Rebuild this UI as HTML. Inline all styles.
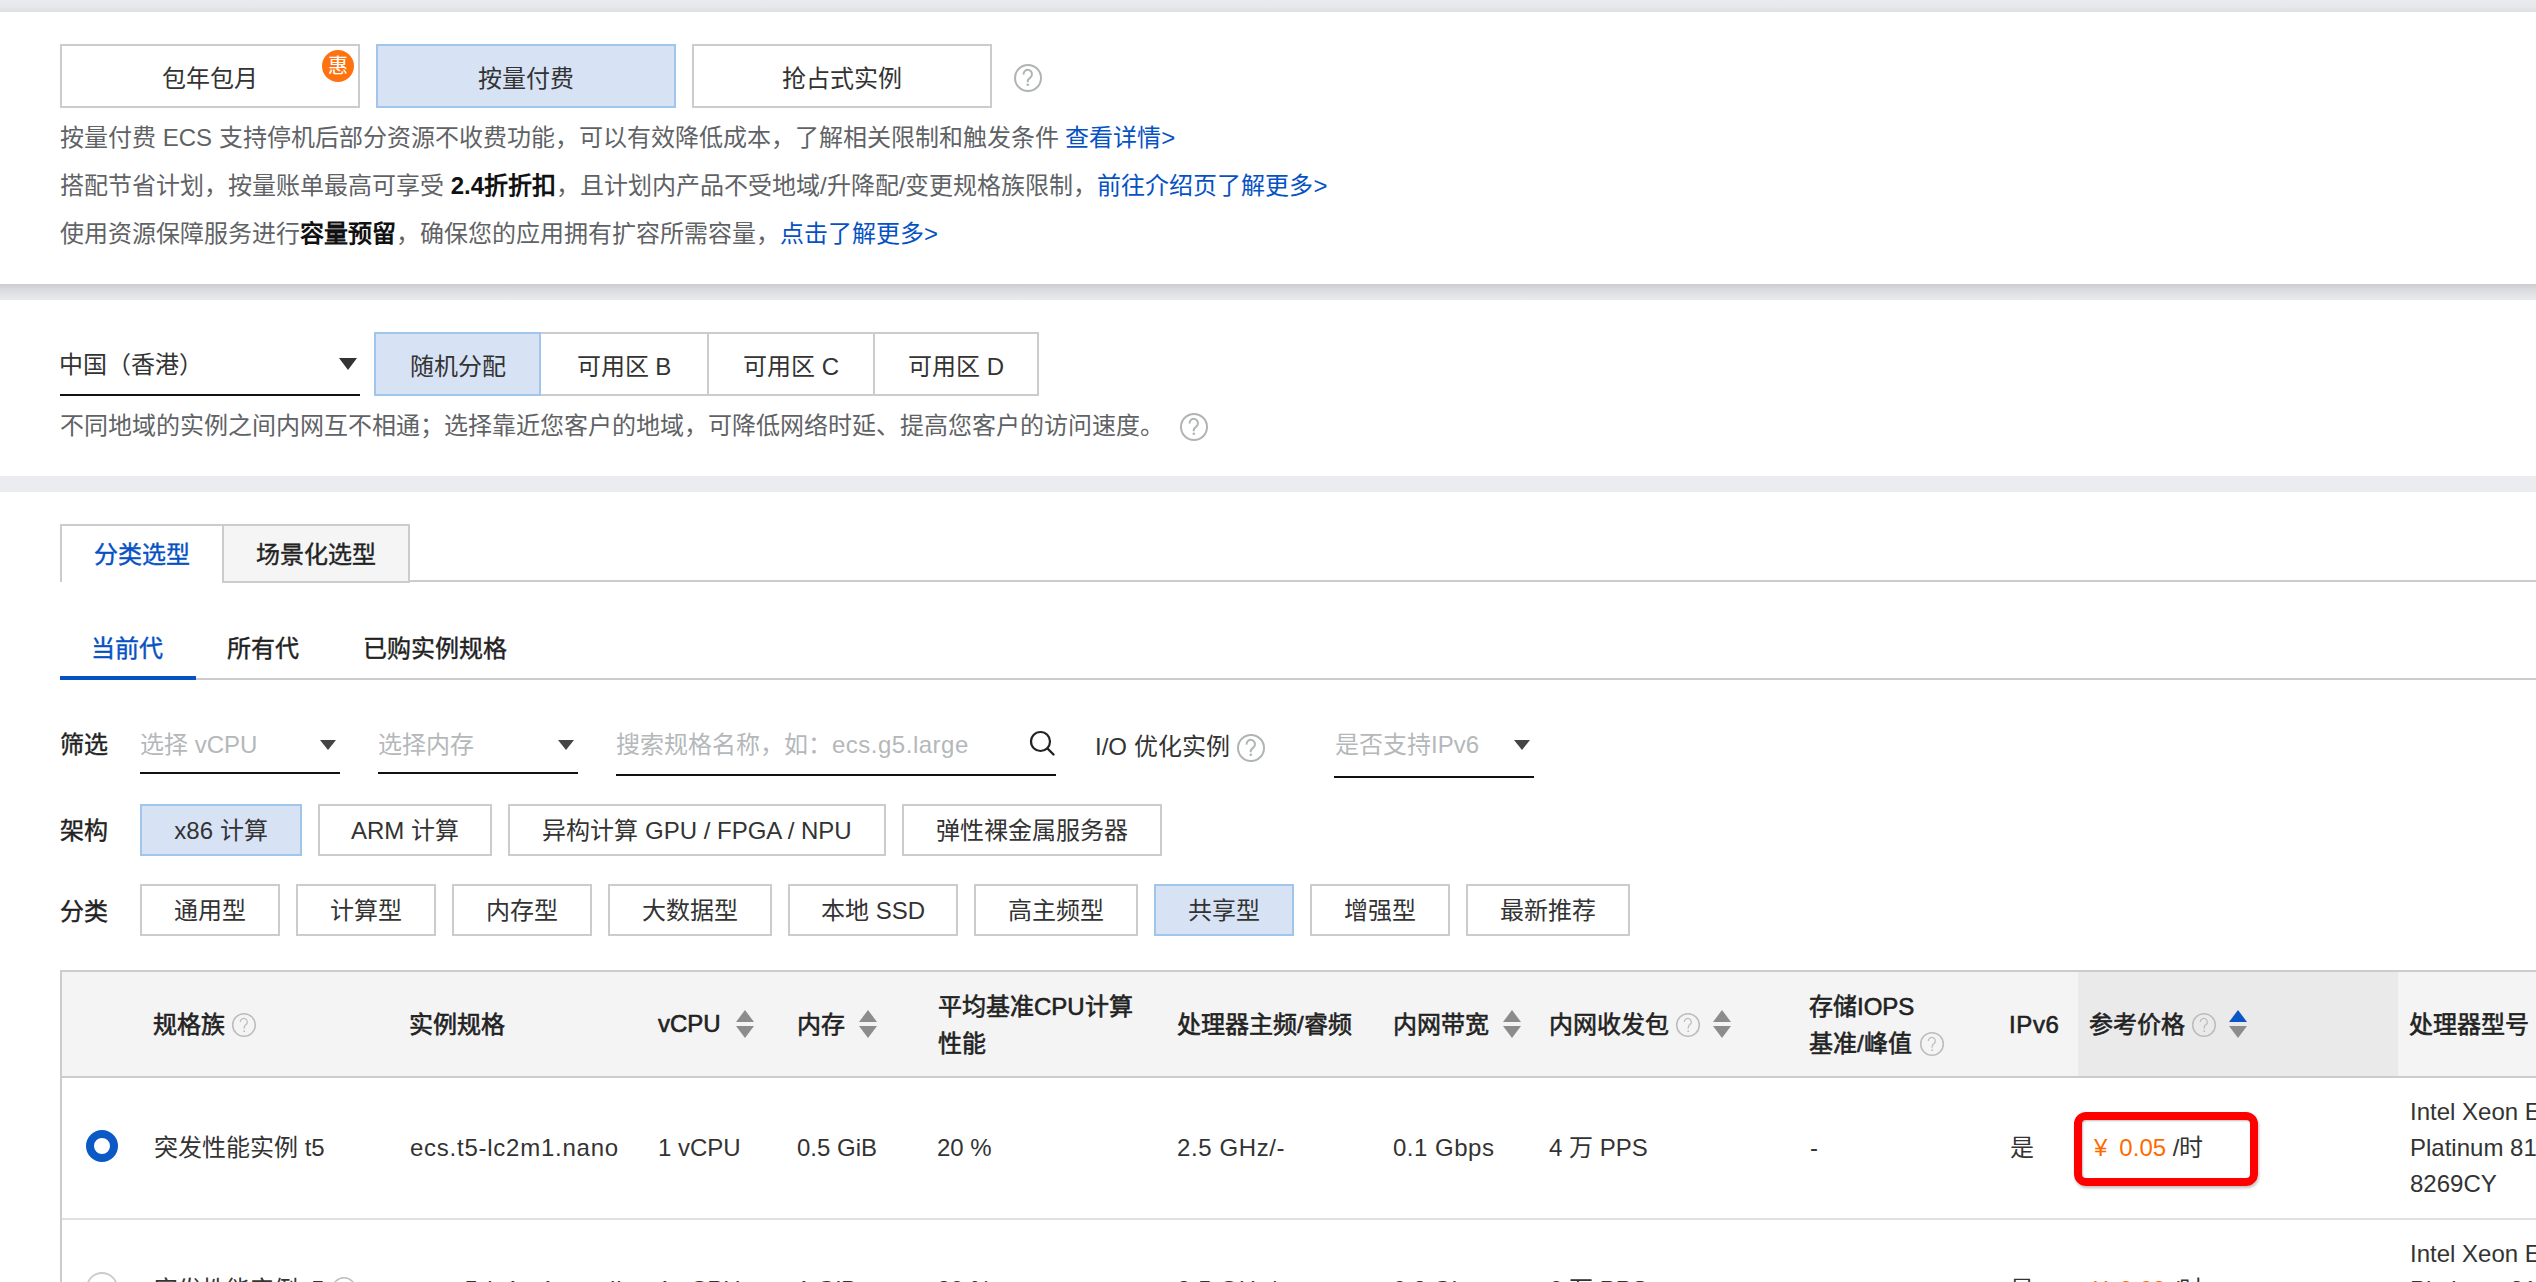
<!DOCTYPE html>
<html lang="zh-CN">
<head>
<meta charset="utf-8">
<style>
*{box-sizing:border-box;margin:0;padding:0}
html,body{width:2536px;height:1282px;overflow:hidden;background:#fff}
body{position:relative;font-family:"Liberation Sans",sans-serif;font-size:24px;color:#333}
.a{position:absolute;white-space:nowrap}
.band{position:absolute;left:0;width:2536px}
.btn{position:absolute;border:2px solid #ccc;background:#fff;display:flex;align-items:center;justify-content:center;color:#333;white-space:nowrap}
.sel{background:#d7e3f5;border-color:#a1c6ec}
.desc{color:#5f6366;line-height:48px}
.link{color:#0652c4}
.q{position:absolute}
.ul{position:absolute;height:2px;background:#111}
.tri{position:absolute;width:0;height:0;border-left:9px solid transparent;border-right:9px solid transparent;border-top:12px solid #333}
.tri2{position:absolute;width:0;height:0;border-left:8px solid transparent;border-right:8px solid transparent;border-top:10px solid #444}
.ph{color:#b4b8ba}
.th{color:#222;-webkit-text-stroke:0.6px #222}
.md{-webkit-text-stroke:0.4px currentColor}
.td{color:#333}
</style>
</head>
<body>
<!-- top band -->
<div class="band" style="top:0;height:12px;background:linear-gradient(#e9eaee 0,#e7e8ec 55%,#dedfe3 100%)"></div>

<!-- section 1 -->
<div class="btn" style="left:60px;top:44px;width:300px;height:64px">包年包月</div>
<div class="a" style="left:322px;top:50px;width:32px;height:32px;border-radius:50%;background:#fe7310;color:#fff;font-size:20px;line-height:32px;text-align:center">惠</div>
<div class="btn sel" style="left:376px;top:44px;width:300px;height:64px">按量付费</div>
<div class="btn" style="left:692px;top:44px;width:300px;height:64px">抢占式实例</div>
<svg class="q" style="left:1013px;top:63px" width="30" height="30" viewBox="0 0 30 30"><circle cx="15" cy="15" r="13" fill="none" stroke="#b0b4b4" stroke-width="2"/><path d="M10.6 11.6A4.2 4.2 0 1 1 17.6 14.2L15.6 16.2Q14.7 17.1 14.7 18.3V19.2" fill="none" stroke="#b0b4b4" stroke-width="2"/><circle cx="14.8" cy="21.8" r="1.3" fill="#b0b4b4"/></svg>

<div class="a desc" style="left:60px;top:114px">按量付费 ECS 支持停机后部分资源不收费功能，可以有效降低成本，了解相关限制和触发条件 <span class="link">查看详情&gt;</span></div>
<div class="a desc" style="left:60px;top:162px">搭配节省计划，按量账单最高可享受 <b style="color:#111">2.4折折扣</b>，且计划内产品不受地域/升降配/变更规格族限制，<span class="link">前往介绍页了解更多&gt;</span></div>
<div class="a desc" style="left:60px;top:210px">使用资源保障服务进行<b style="color:#111">容量预留</b>，确保您的应用拥有扩容所需容量，<span class="link">点击了解更多&gt;</span></div>

<!-- band 1 -->
<div class="band" style="top:284px;height:16px;background:linear-gradient(#cbccd0 0,#d8d9dd 30%,#e3e4e8 70%,#e9eaee 100%)"></div>

<!-- section 2 -->
<div class="a" style="left:59px;top:341px;line-height:48px;color:#333">中国（香港）</div>
<div class="tri" style="left:339px;top:358px"></div>
<div class="ul" style="left:60px;top:394px;width:300px"></div>
<div class="btn sel" style="left:374px;top:332px;width:167px;height:64px;z-index:2">随机分配</div>
<div class="btn" style="left:539px;top:332px;width:170px;height:64px">可用区 B</div>
<div class="btn" style="left:707px;top:332px;width:168px;height:64px">可用区 C</div>
<div class="btn" style="left:873px;top:332px;width:166px;height:64px">可用区 D</div>
<div class="a desc" style="left:60px;top:402px">不同地域的实例之间内网互不相通；选择靠近您客户的地域，可降低网络时延、提高您客户的访问速度。</div>
<svg class="q" style="left:1179px;top:412px" width="30" height="30" viewBox="0 0 30 30"><circle cx="15" cy="15" r="13" fill="none" stroke="#b0b4b4" stroke-width="2"/><path d="M10.6 11.6A4.2 4.2 0 1 1 17.6 14.2L15.6 16.2Q14.7 17.1 14.7 18.3V19.2" fill="none" stroke="#b0b4b4" stroke-width="2"/><circle cx="14.8" cy="21.8" r="1.3" fill="#b0b4b4"/></svg>

<!-- band 2 -->
<div class="band" style="top:476px;height:16px;background:#ebecf0"></div>

<!-- section 3 tabs -->
<div class="a" style="left:60px;top:580px;width:2476px;height:2px;background:#ccc"></div>
<div class="a md" style="left:60px;top:524px;width:164px;height:58px;border:2px solid #ccc;border-bottom:none;background:#fff;color:#0652c4;display:flex;align-items:center;justify-content:center;z-index:2;padding-bottom:4px">分类选型</div>
<div class="a md" style="left:222px;top:524px;width:188px;height:59px;border:2px solid #ccc;background:#f5f5f5;color:#222;display:flex;align-items:center;justify-content:center;padding-bottom:3px">场景化选型</div>

<div class="a" style="left:60px;top:678px;width:2476px;height:2px;background:#ccc"></div>
<div class="a" style="left:60px;top:676px;width:136px;height:4px;background:#0652c4"></div>
<div class="a md" style="left:91px;top:625px;line-height:48px;color:#0652c4;">当前代</div>
<div class="a md" style="left:227px;top:625px;line-height:48px;color:#222;">所有代</div>
<div class="a md" style="left:363px;top:625px;line-height:48px;color:#222;">已购实例规格</div>

<!-- filter row -->
<div class="a md" style="left:60px;top:721px;line-height:48px;color:#222;">筛选</div>
<div class="a ph" style="left:140px;top:721px;line-height:48px">选择 vCPU</div>
<div class="tri2" style="left:320px;top:740px"></div>
<div class="ul" style="left:140px;top:772px;width:200px"></div>
<div class="a ph" style="left:378px;top:721px;line-height:48px">选择内存</div>
<div class="tri2" style="left:558px;top:740px"></div>
<div class="ul" style="left:378px;top:772px;width:200px"></div>
<div class="a ph" style="left:616px;top:721px;line-height:48px">搜索规格名称，如：<span style="letter-spacing:0.5px">ecs.g5.large</span></div>
<svg class="q" style="left:1028px;top:729px" width="30" height="30" viewBox="0 0 30 30"><circle cx="12.5" cy="12.5" r="9.5" fill="none" stroke="#222" stroke-width="2.2"/><path d="M19.5 19.5L25.5 25.5" stroke="#222" stroke-width="2.4" stroke-linecap="round"/></svg>
<div class="ul" style="left:616px;top:774px;width:440px"></div>
<div class="a" style="left:1095px;top:723px;line-height:48px;color:#333">I/O 优化实例</div>
<svg class="q" style="left:1236px;top:733px" width="30" height="30" viewBox="0 0 30 30"><circle cx="15" cy="15" r="13" fill="none" stroke="#b0b4b4" stroke-width="2"/><path d="M10.6 11.6A4.2 4.2 0 1 1 17.6 14.2L15.6 16.2Q14.7 17.1 14.7 18.3V19.2" fill="none" stroke="#b0b4b4" stroke-width="2"/><circle cx="14.8" cy="21.8" r="1.3" fill="#b0b4b4"/></svg>
<div class="a ph" style="left:1335px;top:721px;line-height:48px">是否支持IPv6</div>
<div class="tri2" style="left:1514px;top:740px"></div>
<div class="ul" style="left:1334px;top:776px;width:200px"></div>

<!-- arch row -->
<div class="a md" style="left:60px;top:807px;line-height:48px;color:#222;">架构</div>
<div class="btn sel" style="left:140px;top:804px;width:162px;height:52px;padding-bottom:4px">x86 计算</div>
<div class="btn" style="left:318px;top:804px;width:174px;height:52px;padding-bottom:4px">ARM 计算</div>
<div class="btn" style="left:508px;top:804px;width:378px;height:52px;padding-bottom:4px">异构计算 GPU / FPGA / NPU</div>
<div class="btn" style="left:902px;top:804px;width:260px;height:52px;padding-bottom:4px">弹性裸金属服务器</div>

<!-- class row -->
<div class="a md" style="left:60px;top:888px;line-height:48px;color:#222;">分类</div>
<div class="btn" style="left:140px;top:884px;width:140px;height:52px;padding-bottom:4px">通用型</div>
<div class="btn" style="left:296px;top:884px;width:140px;height:52px;padding-bottom:4px">计算型</div>
<div class="btn" style="left:452px;top:884px;width:140px;height:52px;padding-bottom:4px">内存型</div>
<div class="btn" style="left:608px;top:884px;width:164px;height:52px;padding-bottom:4px">大数据型</div>
<div class="btn" style="left:788px;top:884px;width:170px;height:52px;padding-bottom:4px">本地 SSD</div>
<div class="btn" style="left:974px;top:884px;width:164px;height:52px;padding-bottom:4px">高主频型</div>
<div class="btn sel" style="left:1154px;top:884px;width:140px;height:52px;padding-bottom:4px">共享型</div>
<div class="btn" style="left:1310px;top:884px;width:140px;height:52px;padding-bottom:4px">增强型</div>
<div class="btn" style="left:1466px;top:884px;width:164px;height:52px;padding-bottom:4px">最新推荐</div>

<!-- table -->
<div class="a" style="left:60px;top:970px;width:2476px;height:108px;background:#f4f4f4;border-top:2px solid #ccc;border-left:2px solid #ccc;border-bottom:2px solid #ccc"></div>
<div class="a" style="left:2078px;top:972px;width:320px;height:104px;background:#eaeaea"></div>
<div class="a" style="left:60px;top:1078px;width:2px;height:204px;background:#ccc"></div>
<div class="a" style="left:62px;top:1218px;width:2474px;height:2px;background:#e0e0e0"></div>

<div class="a th" style="left:153px;top:1001px;line-height:48px">规格族</div>
<div class="a th" style="left:409px;top:1001px;line-height:48px">实例规格</div>
<div class="a th" style="left:658px;top:1000px;line-height:48px">vCPU</div>
<div class="a th" style="left:797px;top:1001px;line-height:48px">内存</div>
<div class="a th" style="left:938px;top:988px;line-height:37px;white-space:normal">平均基准CPU计算<br>性能</div>
<div class="a th" style="left:1177px;top:1001px;line-height:48px">处理器主频/睿频</div>
<div class="a th" style="left:1393px;top:1001px;line-height:48px">内网带宽</div>
<div class="a th" style="left:1549px;top:1001px;line-height:48px">内网收发包</div>
<div class="a th" style="left:1809px;top:988px;line-height:37px">存储IOPS<br>基准/峰值</div>
<div class="a th" style="left:2009px;top:1001px;letter-spacing:0.6px;line-height:48px">IPv6</div>
<div class="a th" style="left:2089px;top:1001px;line-height:48px">参考价格</div>
<div class="a th" style="left:2409px;top:1001px;line-height:48px">处理器型号</div>

<svg class="q" style="left:735px;top:1009px" width="20" height="30" viewBox="0 0 20 30"><path d="M10 1L19 13H1Z" fill="#8c8c8c"/><path d="M1 17H19L10 29Z" fill="#8c8c8c"/></svg>
<svg class="q" style="left:858px;top:1009px" width="20" height="30" viewBox="0 0 20 30"><path d="M10 1L19 13H1Z" fill="#8c8c8c"/><path d="M1 17H19L10 29Z" fill="#8c8c8c"/></svg>
<svg class="q" style="left:1502px;top:1009px" width="20" height="30" viewBox="0 0 20 30"><path d="M10 1L19 13H1Z" fill="#8c8c8c"/><path d="M1 17H19L10 29Z" fill="#8c8c8c"/></svg>
<svg class="q" style="left:1712px;top:1009px" width="20" height="30" viewBox="0 0 20 30"><path d="M10 1L19 13H1Z" fill="#8c8c8c"/><path d="M1 17H19L10 29Z" fill="#8c8c8c"/></svg>
<svg class="q" style="left:2228px;top:1009px" width="20" height="30" viewBox="0 0 20 30"><path d="M10 1L19 13H1Z" fill="#0a56c4"/><path d="M1 17H19L10 29Z" fill="#8c8c8c"/></svg>
<svg class="q" style="left:231px;top:1012px" width="26" height="26" viewBox="0 0 26 26"><circle cx="13" cy="13" r="11.3" fill="none" stroke="#bdbdbd" stroke-width="1.6"/><path d="M9.3 9.9A3.5 3.5 0 1 1 15 12.6Q13.2 13.8 13.2 15.6V16.8" fill="none" stroke="#bdbdbd" stroke-width="1.25"/><circle cx="13.2" cy="19.2" r="0.9" fill="#bdbdbd"/></svg>
<svg class="q" style="left:1675px;top:1012px" width="26" height="26" viewBox="0 0 26 26"><circle cx="13" cy="13" r="11.3" fill="none" stroke="#bdbdbd" stroke-width="1.6"/><path d="M9.3 9.9A3.5 3.5 0 1 1 15 12.6Q13.2 13.8 13.2 15.6V16.8" fill="none" stroke="#bdbdbd" stroke-width="1.25"/><circle cx="13.2" cy="19.2" r="0.9" fill="#bdbdbd"/></svg>
<svg class="q" style="left:1919px;top:1031px" width="26" height="26" viewBox="0 0 26 26"><circle cx="13" cy="13" r="11.3" fill="none" stroke="#bdbdbd" stroke-width="1.6"/><path d="M9.3 9.9A3.5 3.5 0 1 1 15 12.6Q13.2 13.8 13.2 15.6V16.8" fill="none" stroke="#bdbdbd" stroke-width="1.25"/><circle cx="13.2" cy="19.2" r="0.9" fill="#bdbdbd"/></svg>
<svg class="q" style="left:2191px;top:1012px" width="26" height="26" viewBox="0 0 26 26"><circle cx="13" cy="13" r="11.3" fill="none" stroke="#bdbdbd" stroke-width="1.6"/><path d="M9.3 9.9A3.5 3.5 0 1 1 15 12.6Q13.2 13.8 13.2 15.6V16.8" fill="none" stroke="#bdbdbd" stroke-width="1.25"/><circle cx="13.2" cy="19.2" r="0.9" fill="#bdbdbd"/></svg>
<!-- row 1 -->
<div class="a" style="left:86px;top:1130px;width:32px;height:32px;border-radius:50%;border:8px solid #0a59c5;background:#fff"></div>
<div class="a td" style="left:154px;top:1124px;line-height:48px">突发性能实例 t5</div>
<div class="a td" style="left:410px;top:1124px;line-height:48px;letter-spacing:0.75px">ecs.t5-lc2m1.nano</div>
<div class="a td" style="left:658px;top:1124px;line-height:48px">1 vCPU</div>
<div class="a td" style="left:797px;top:1124px;line-height:48px">0.5 GiB</div>
<div class="a td" style="left:937px;top:1124px;line-height:48px">20 %</div>
<div class="a td" style="left:1177px;top:1124px;line-height:48px;letter-spacing:0.6px">2.5 GHz/-</div>
<div class="a td" style="left:1393px;top:1124px;line-height:48px;letter-spacing:0.5px">0.1 Gbps</div>
<div class="a td" style="left:1549px;top:1124px;line-height:48px">4 万 PPS</div>
<div class="a td" style="left:1810px;top:1124px;line-height:48px">-</div>
<div class="a td" style="left:2010px;top:1124px;line-height:48px">是</div>
<div class="a td" style="left:2094px;top:1124px;line-height:48px"><span style="color:#ff6a00">¥<span style="margin-left:12px">0.05</span></span> /时</div>
<div class="a td" style="left:2410px;top:1094px;line-height:36px">Intel Xeon E5<br>Platinum 8163<br>8269CY</div>
<div class="a" style="left:2074px;top:1112px;width:184px;height:74px;border:8px solid #fe0000;border-radius:12px;box-shadow:1px 2px 3px rgba(0,0,0,.25), inset 1px 1px 2px rgba(0,0,0,.25)"></div>

<!-- row 2 -->
<svg class="q" style="left:331px;top:1276px" width="26" height="26" viewBox="0 0 26 26"><circle cx="13" cy="13" r="11.3" fill="none" stroke="#bdbdbd" stroke-width="1.6"/></svg>

<div class="a" style="left:86px;top:1272px;width:32px;height:32px;border-radius:50%;border:2px solid #ccc;background:#fff"></div>
<div class="a td" style="left:154px;top:1266px;line-height:48px">突发性能实例 t5</div>
<div class="a td" style="left:410px;top:1266px;line-height:48px;letter-spacing:0.75px">ecs.t5-lc1m1.small</div>
<div class="a td" style="left:658px;top:1266px;line-height:48px">1 vCPU</div>
<div class="a td" style="left:797px;top:1266px;line-height:48px">1 GiB</div>
<div class="a td" style="left:937px;top:1266px;line-height:48px">20 %</div>
<div class="a td" style="left:1177px;top:1266px;line-height:48px;letter-spacing:0.6px">2.5 GHz/-</div>
<div class="a td" style="left:1393px;top:1266px;line-height:48px">0.2 Gbps</div>
<div class="a td" style="left:1549px;top:1266px;line-height:48px">6 万 PPS</div>
<div class="a td" style="left:2010px;top:1266px;line-height:48px">是</div>
<div class="a td" style="left:2094px;top:1266px;line-height:48px"><span style="color:#ff6a00">¥<span style="margin-left:12px">0.09</span></span> /时</div>
<div class="a td" style="left:2410px;top:1236px;line-height:36px">Intel Xeon E5<br>Platinum 8163</div>
</body>
</html>
